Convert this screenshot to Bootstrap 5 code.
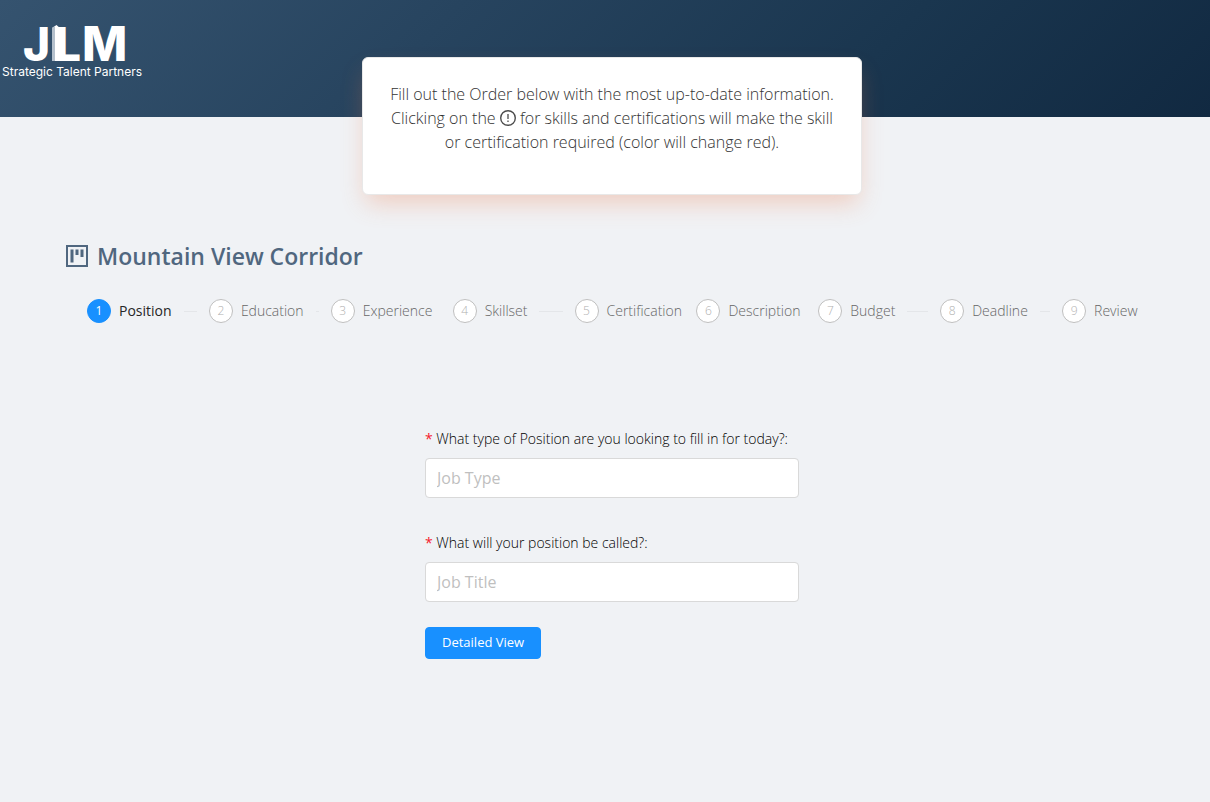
<!DOCTYPE html>
<html lang="en">
<head>
<meta charset="utf-8">
<meta name="viewport" content="width=device-width, initial-scale=1">
<title>Mountain View Corridor – Order</title>
<link href="https://cdn.jsdelivr.net/npm/bootstrap@5.3.0/dist/css/bootstrap.min.css" rel="stylesheet">
<style>
  body { background: #f0f2f5; color: #595959; font-family: "Open Sans", "Noto Sans", sans-serif; font-size: 14px; line-height: 22px; min-height: 100vh; }
  .site-header { background: linear-gradient(135deg, #35536f 0%, #27445f 35%, #1a364f 70%, #112941 100%); height: 117px; padding-top: 10px; }
  .brand-logo { width: 160px; height: 80px; }
  .notice { width: 500px; max-width: 100%; min-height: 138px; margin-top: -60px; border: 1px solid #e8e8e8; border-radius: 6px; box-shadow: 0 12px 24px -4px rgba(240, 120, 70, .3); font-size: 16px; line-height: 24px; font-weight: 300; color: #333; padding: 24px; }
  .notice svg { vertical-align: -2px; }
  .shell { padding-left: 51px; padding-right: 37px; }
  .order-title { color: #50677f; font-size: 23px; line-height: 32px; font-weight: 600; margin-top: 45px; padding-left: 15px; }
  .steps { display: grid; grid-template-columns: repeat(9, minmax(0, 1fr)); padding-left: 36px; margin: 27px -11px 105px 0; }
  .step { font-weight: 300; color: #666; white-space: nowrap; }
  .step-no { width: 24px; height: 24px; border: 1px solid #bfbfbf; background: #fff; color: #b0b0b0; font-size: 12px; flex: none; }
  .step.current { color: #262626; font-weight: 500; }
  .step.current .step-no { background: #1890ff; border-color: #1890ff; color: #fff; font-weight: 400; }
  .step:not(:last-child)::after { content: ""; flex: 1; height: 1px; background: #e4e6e9; margin: 0 12px; }
  .field + .field { margin-top: 34px; }
  .order-form .form-label { color: #000; margin-bottom: 8px; display: block; font-weight: 300; font-size: 14px; }
  .req { color: #f5222d; font-weight: 400; }
  .order-form .form-control { height: 40px; border-color: #d9d9d9; border-radius: 4px; font-size: 16px; padding: 6px 11px; }
  .order-form .form-control::placeholder { color: #bfbfbf; }
  .btn-order { --bs-btn-bg: #1890ff; --bs-btn-border-color: #1890ff; --bs-btn-color: #fff; --bs-btn-hover-bg: #40a9ff; --bs-btn-hover-color: #fff; height: 32px; margin-top: 25px; padding: 0 16px; font-size: 13px; font-weight: 500; border-radius: 4px; }
</style>
</head>
<body>
<header class="site-header">
  <svg class="brand-logo d-block" viewBox="0 0 160 80" role="img" aria-label="JLM Strategic Talent Partners">
    <g fill="#fff" font-family="Inter, sans-serif" font-weight="800" font-size="46">
      <text x="23" y="51">J</text><text x="55" y="51">L</text><text x="82" y="51" font-size="48">M</text>
    </g>
    <path d="M52 18l4.500-3 4.500 4v32h-9z" fill="#fff"/>
    <path d="M52 18l3-2v35h-3z" fill="#b4c0cc"/>
    <text x="2" y="66" fill="#fff" font-family="Inter, sans-serif" font-size="12">Strategic Talent Partners</text>
  </svg>
</header>
<main class="shell">
  <section class="notice bg-white mx-auto position-relative text-center">
    Fill out the Order below with the most up-to-date information. Clicking on the
    <svg width="16" height="16" viewBox="0 0 16 16" fill="none" stroke="#4d4d4d" aria-hidden="true"><circle cx="8" cy="8" r="7.300" stroke-width="1.400"/><path d="M8 4v5M8 10.500v1.500" stroke-width="1.300"/></svg>
    for skills and certifications will make the skill or certification required (color will change red).
  </section>
  <h1 class="order-title d-flex align-items-center gap-2 mb-0">
    <svg width="23" height="22" viewBox="0 0 23 22" fill="#50677f" aria-hidden="true"><path d="M1 1h20v20H1z" fill="none" stroke="#50677f" stroke-width="2"/><path d="M4.500 4.500h3v13h-3zM9.500 4.500h3v5.500h-3zM14.500 4.500h3v7.500h-3z"/></svg>
    Mountain View Corridor
  </h1>
  <ol class="steps list-unstyled">
    <li class="step current d-flex align-items-center" aria-current="step"><span class="step-no rounded-circle d-flex align-items-center justify-content-center me-2">1</span>Position</li>
    <li class="step d-flex align-items-center"><span class="step-no rounded-circle d-flex align-items-center justify-content-center me-2">2</span>Education</li>
    <li class="step d-flex align-items-center"><span class="step-no rounded-circle d-flex align-items-center justify-content-center me-2">3</span>Experience</li>
    <li class="step d-flex align-items-center"><span class="step-no rounded-circle d-flex align-items-center justify-content-center me-2">4</span>Skillset</li>
    <li class="step d-flex align-items-center"><span class="step-no rounded-circle d-flex align-items-center justify-content-center me-2">5</span>Certification</li>
    <li class="step d-flex align-items-center"><span class="step-no rounded-circle d-flex align-items-center justify-content-center me-2">6</span>Description</li>
    <li class="step d-flex align-items-center"><span class="step-no rounded-circle d-flex align-items-center justify-content-center me-2">7</span>Budget</li>
    <li class="step d-flex align-items-center"><span class="step-no rounded-circle d-flex align-items-center justify-content-center me-2">8</span>Deadline</li>
    <li class="step d-flex align-items-center"><span class="step-no rounded-circle d-flex align-items-center justify-content-center me-2">9</span>Review</li>
  </ol>
  <div class="row g-0 justify-content-center order-form">
    <form class="col-4">
      <div class="field">
        <label class="form-label" for="jobType"><span class="req">*</span> What type of Position are you looking to fill in for today?:</label>
        <input class="form-control" id="jobType" type="text" placeholder="Job Type">
      </div>
      <div class="field">
        <label class="form-label" for="jobTitle"><span class="req">*</span> What will your position be called?:</label>
        <input class="form-control" id="jobTitle" type="text" placeholder="Job Title">
      </div>
      <button class="btn btn-order" type="button">Detailed View</button>
    </form>
  </div>
</main>
<script src="https://cdn.jsdelivr.net/npm/bootstrap@5.3.0/dist/js/bootstrap.bundle.min.js"></script>
</body>
</html>
